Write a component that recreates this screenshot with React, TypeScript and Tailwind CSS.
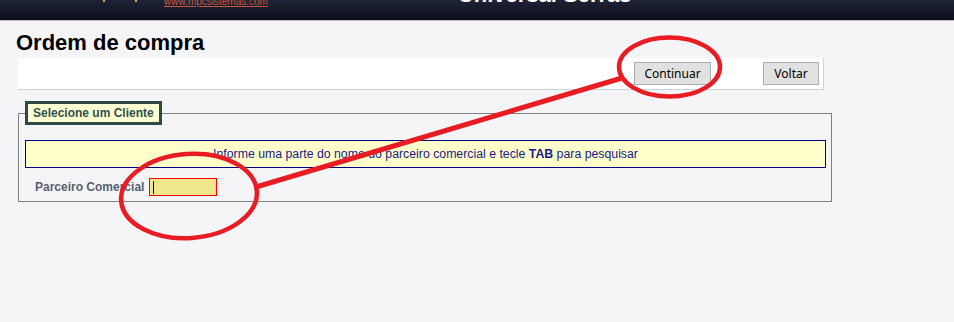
export default function App() {
  return (
    <div className="relative h-[322px] w-[954px] overflow-hidden bg-[#f5f5f8] font-['Liberation_Sans',Arial,sans-serif]">
      {/* top banner, only its lower edge is on screen */}
      <header className="h-[21px] overflow-hidden border-b border-[#c2c2c2] bg-gradient-to-b from-[#1e2336] to-[#0c0f1b]">
        <div className="flex items-start">
          <span className="ml-[103px] mt-0 h-[2px] w-[2px] bg-[#d9a23a]" />
          <span className="ml-[30px] mt-0 h-[2px] w-[2px] bg-[#e0a440]" />
          <a className="ml-[27px] mt-[-3px] text-[10px] leading-none text-[#c8583c] underline">
            www.mpcsistemas.com
          </a>
          <span className="ml-[190px] mt-[-16px] text-[22px] font-bold leading-none text-white">
            Universal Serras
          </span>
        </div>
      </header>

      <main className="pt-[11px]">
        <h1 className="ml-[16px] text-[22px] font-bold leading-none text-black">Ordem de compra</h1>

        <div className="ml-[18px] mt-[4px] flex h-[32px] w-[806px] items-start justify-end border-b border-r border-[#c6d6d6] bg-white pr-[4px] pt-[4px]">
          <button className="h-[23px] w-[77px] border border-[#adadad] bg-[#e1e1e1] font-['Noto_Sans',sans-serif] text-[12px] leading-none text-black">
            Continuar
          </button>
          <button className="ml-[52px] h-[23px] w-[56px] border border-[#adadad] bg-[#e1e1e1] font-['Noto_Sans',sans-serif] text-[12px] leading-none text-black">
            Voltar
          </button>
        </div>

        <fieldset className="ml-[18px] mt-[11px] w-[814px] border border-[#808080] px-[6px] pb-[5px] pr-[5px] pt-[15px]">
          <legend className="border-[3px] border-[#2e4a47] bg-[#ffffd4] px-[5px] text-[12px] font-bold leading-[18px] text-[#2f4f4f]">
            Selecione um Cliente
          </legend>
          <div className="h-[28px] border border-[#000080] bg-[#ffffcc] text-center text-[12.3px] leading-[26px] text-[#1a1a8c]">
            Informe uma parte do nome do parceiro comercial e tecle <b>TAB</b> para pesquisar
          </div>
          <div className="mt-[10px] flex items-center pl-[10px]">
            <label className="text-[12px] font-bold text-[#566170]">Parceiro Comercial</label>
            <div className="ml-[5px] flex h-[18px] w-[68px] items-center border border-[#ff0000] bg-[#f0e68c] pl-[3px]">
              <span className="h-[13px] w-[1px] bg-black" />
            </div>
          </div>
        </fieldset>
      </main>

      {/* red hand-drawn marks over the page */}
      <svg className="pointer-events-none absolute inset-0" width="954" height="322" viewBox="0 0 954 322">
        <g fill="none" stroke="#e91c24" strokeWidth="4.5">
          <ellipse cx="669.5" cy="67" rx="50.5" ry="29.5" />
          <ellipse cx="189" cy="196" rx="68" ry="42" transform="rotate(-4 189 196)" />
          <line x1="256" y1="187" x2="622" y2="78" strokeWidth="5" />
        </g>
      </svg>
    </div>
  );
}
